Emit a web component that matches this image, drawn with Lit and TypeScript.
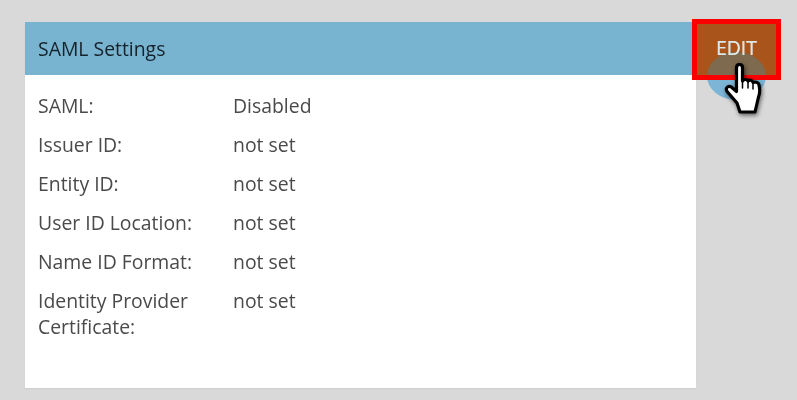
import { LitElement, html, css } from "lit";
import { customElement } from "lit/decorators.js";

const rows: [string, string][] = [
  ["SAML:", "Disabled"],
  ["Issuer ID:", "not set"],
  ["Entity ID:", "not set"],
  ["User ID Location:", "not set"],
  ["Name ID Format:", "not set"],
  ["Identity Provider Certificate:", "not set"],
];

@customElement("app-root")
export class AppRoot extends LitElement {
  static styles = css`
    :host {
      display: block;
      width: 797px;
      height: 400px;
      background: #d9d9d9;
      font-family: "Open Sans", sans-serif;
      overflow: hidden;
      position: relative;
    }
    .page {
      padding: 22px 0 0 25px;
    }
    .card {
      width: 671px;
      height: 366px;
      background: #fff;
      box-shadow: 0 1px 1px #cfcfcf;
    }
    .head {
      height: 53px;
      box-sizing: border-box;
      padding-left: 13px;
      display: flex;
      align-items: center;
      background: #78b3cf;
      color: #16222c;
      font-size: 19.4px;
    }
    .head span,
    .rows div,
    .edit span {
      filter: blur(0.35px);
    }
    .rows {
      padding: 18px 13px 0;
      display: grid;
      grid-template-columns: 195px 1fr;
      row-gap: 13.5px;
      font-size: 19.4px;
      line-height: 25.5px;
      color: #4a4a4a;
    }
    .label {
      width: 165px;
    }
    .circle {
      position: absolute;
      left: 707px;
      top: 52px;
      width: 59px;
      height: 48px;
      border-radius: 50%;
      background: #7db5d6;
    }
    .edit {
      position: absolute;
      left: 692px;
      top: 19px;
      width: 89px;
      height: 61px;
      box-sizing: border-box;
      border: 5px solid #fb0000;
      background: #a8541a;
      display: flex;
      justify-content: center;
      padding-top: 12px;
      color: #dbe8ea;
      font-size: 19.4px;
      line-height: 24px;
      overflow: hidden;
    }
    .edit .inner {
      position: absolute;
      left: 10px;
      top: 28px;
      width: 59px;
      height: 48px;
      border-radius: 50%;
      background: #7d6a4f;
    }
    .edit span {
      position: relative;
      text-shadow: 0 0 0.6px #dbe8ea;
    }
    .hand {
      position: absolute;
      left: 724px;
      top: 63px;
      width: 42px;
      height: 56px;
      filter: drop-shadow(1px 2px 2px rgba(0, 0, 0, 0.55));
    }
  `;

  render() {
    return html`
      <div class="page">
        <div class="card">
          <div class="head"><span>SAML Settings</span></div>
          <div class="rows">
            ${rows.map(
              ([k, v]) => html`<div class="label">${k}</div><div>${v}</div>`
            )}
          </div>
        </div>
      </div>
      <div class="circle"></div>
      <div class="edit"><div class="inner"></div><span>EDIT</span></div>
      <svg class="hand" viewBox="0 0 42 56">
        <path
          d="M12.500 5c0-2 1.200-3.500 3-3.500s3 1.500 3 3.500v13c1.500-2 4.500-2 5.500 0 1.500-1.500 4.500-1 5 1.500 2-1 5.500-.2 6 2.500 1 4 1 8-.5 12l-3.500 15H16l-3-9-9.500-11c-1.700-2-1.500-4 0-5s3.500-.5 5 1l4 3.500z"
          fill="#fff"
          stroke="#000"
          stroke-width="3.200"
          stroke-linejoin="round"
        />
        <path d="M18.500 18v7M24 19v6M29 20v6" stroke="#000" stroke-width="1.500" fill="none" stroke-linecap="round" />
      </svg>
    `;
  }
}
